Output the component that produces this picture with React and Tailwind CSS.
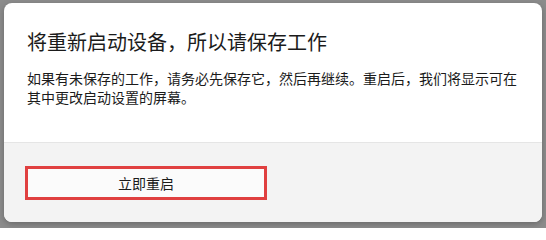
import React from 'react'

const font = { fontFamily: '"Noto Sans CJK SC", "Noto Sans", sans-serif' }

export default function App() {
  return (
    <div className="w-[546px] h-[228px] overflow-hidden bg-[#8c8c8c] pt-[3px] pl-[4px]" style={font}>
      <div className="w-[538px] h-[219px] bg-white rounded-lg overflow-hidden flex flex-col shadow-[0_2px_6px_rgba(0,0,0,0.25)]">
        <div className="h-[139px] px-[23px] pt-[25px] text-[#1b1b1b]">
          <h1 className="text-[20px] leading-[28px] font-normal">将重新启动设备，所以请保存工作</h1>
          <p className="mt-[13px] w-[494px] text-[14px] leading-[19px]">
            如果有未保存的工作，请务必先保存它，然后再继续。重启后，我们将显示可在其中更改启动设置的屏幕。
          </p>
        </div>
        <div className="flex-1 bg-[#f3f3f3] border-t border-[#e5e5e5] px-[21px] pt-[23px]">
          <button className="w-[242px] h-[34px] border-[3px] border-[#e04040] bg-[#fbfbfb] text-[14px] text-[#1b1b1b] flex items-center justify-center">
            立即重启
          </button>
        </div>
      </div>
    </div>
  )
}
